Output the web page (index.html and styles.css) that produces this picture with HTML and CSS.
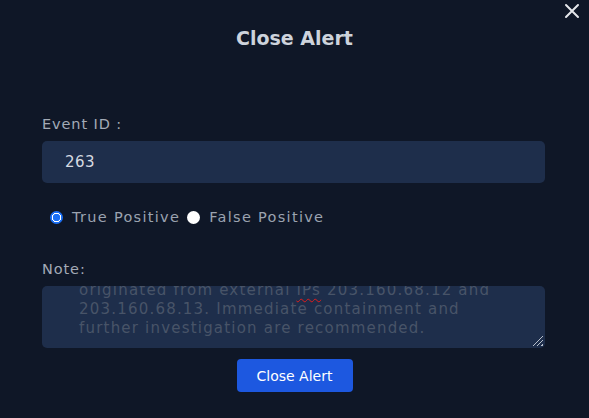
FILE: index.html
```html
<!DOCTYPE html>
<html>
<head>
<meta charset="utf-8">
<link rel="stylesheet" href="styles.css">
</head>
<body>
<div class="modal">
  <button class="close-x" aria-label="Close">
    <svg width="16" height="16" viewBox="0 0 16 16"><path d="M2 2 L14 14 M14 2 L2 14" stroke="#e5e7eb" stroke-width="2" stroke-linecap="round"/></svg>
  </button>
  <h2 class="title">Close Alert</h2>
  <form class="form">
    <label class="label">Event ID :</label>
    <div class="input">263</div>
    <div class="radios">
      <label class="radio"><span class="dot checked"></span>True Positive</label>
      <label class="radio"><span class="dot"></span>False Positive</label>
    </div>
    <label class="label note-label">Note:</label>
    <div class="textarea">
      <div class="ta-text">Multiple failed login attempts on the VPN gateway
followed by a successful authentication. The activity
originated from external <span class="spell">IPs</span> 203.160.68.12 and
203.160.68.13. Immediate containment and
further investigation are recommended.</div>
      <span class="grip"></span>
    </div>
    <div class="actions">
      <button type="button" class="btn">Close Alert</button>
    </div>
  </form>
</div>
</body>
</html>
```
FILE: styles.css
```css
* { box-sizing: border-box; }
html, body { margin: 0; padding: 0; }
body {
  background: #0f1727;
  font-family: "DejaVu Sans", "Noto Sans", sans-serif;
  width: 589px;
  height: 418px;
  overflow: hidden;
}
.modal {
  position: relative;
  height: 418px;
}
.close-x {
  position: absolute;
  top: 3px;
  right: 9px;
  background: none;
  border: 0;
  padding: 0;
  width: 16px;
  height: 16px;
}
.close-x svg { display: block; }
.title {
  margin: 0;
  padding-top: 26px;
  text-align: center;
  font-size: 19px;
  font-weight: bold;
  color: #cdd3dc;
  line-height: 24px;
}
.form {
  display: flex;
  flex-direction: column;
  padding: 0 44px 0 42px;
  margin-top: 64px;
}
.label {
  font-size: 14.5px;
  color: #a3aab6;
  line-height: 20px;
  letter-spacing: 0.9px;
}
.input {
  margin-top: 7px;
  height: 42px;
  background: #1e2e4b;
  border-radius: 5px;
  padding-left: 23px;
  display: flex;
  align-items: center;
  color: #d6dae1;
  font-size: 15px;
  letter-spacing: 0.4px;
}
.radios {
  display: flex;
  gap: 7px;
  margin-top: 24px;
  padding-left: 8px;
}
.radio {
  display: flex;
  align-items: center;
  gap: 9px;
  font-size: 14.5px;
  color: #9ba3b0;
  letter-spacing: 1.3px;
  line-height: 20px;
}
.dot {
  width: 13px;
  height: 13px;
  border-radius: 50%;
  background: #ffffff;
  display: inline-block;
}
.dot.checked {
  background: radial-gradient(circle, #1a6ff5 0 3.5px, #fff 4px 4.5px, #1a6ff5 5px);
}
.note-label {
  margin-top: 32px;
}
.textarea {
  position: relative;
  margin-top: 7px;
  height: 62px;
  background: #1e2e4b;
  border-radius: 5px;
  overflow: hidden;
  display: flex;
  flex-direction: column;
  justify-content: flex-end;
  padding: 0 20px 10px 37px;
}
.ta-text {
  font-size: 15px;
  line-height: 19px;
  color: #485468;
  letter-spacing: 1.2px;
  white-space: pre;
}
.spell {
  text-decoration: underline wavy #e01b1b;
  text-decoration-thickness: 1px;
  text-underline-offset: 3px;
}
.grip {
  position: absolute;
  right: 2px;
  bottom: 2px;
  width: 11px;
  height: 11px;
  background: repeating-linear-gradient(135deg, transparent 0 2px, #b8bfca 2px 3px);
  clip-path: polygon(100% 0, 100% 100%, 0 100%);
}
.actions {
  display: flex;
  justify-content: center;
  margin-top: 11px;
  padding-left: 2px;
}
.btn {
  width: 116px;
  height: 33px;
  background: #1d58e0;
  border: 0;
  border-radius: 4px;
  color: #ffffff;
  font-family: inherit;
  font-size: 14px;
}
```
